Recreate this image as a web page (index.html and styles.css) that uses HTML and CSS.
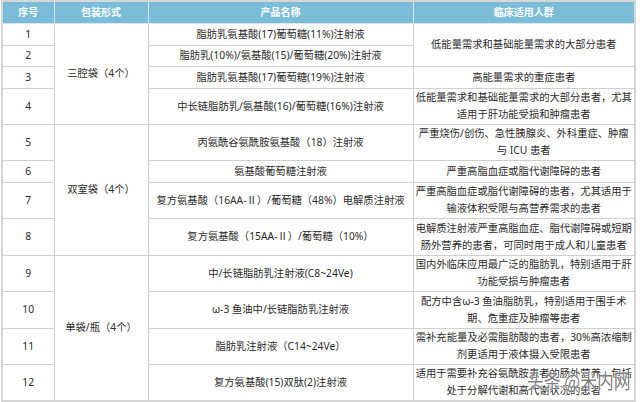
FILE: index.html
```html
<!DOCTYPE html>
<html lang="zh">
<head>
<meta charset="utf-8">
<link rel="stylesheet" href="styles.css">
</head>
<body>
<div class="wrap">
<table class="grid">
  <colgroup>
    <col class="c-no"><col class="c-pack"><col class="c-name"><col class="c-use">
  </colgroup>
  <thead>
    <tr class="h22"><th>序号</th><th>包装形式</th><th>产品名称</th><th>临床适用人群</th></tr>
  </thead>
  <tbody>
    <tr class="h22"><td>1</td><td rowspan="4">三腔袋（4个）</td><td>脂肪乳氨基酸(17)葡萄糖(11%)注射液</td><td rowspan="2">低能量需求和基础能量需求的大部分患者</td></tr>
    <tr class="h21"><td>2</td><td>脂肪乳(10%)/氨基酸(15)/葡萄糖(20%)注射液</td></tr>
    <tr class="h22"><td>3</td><td>脂肪乳氨基酸(17)葡萄糖(19%)注射液</td><td>高能量需求的重症患者</td></tr>
    <tr class="h36"><td>4</td><td>中长链脂肪乳/氨基酸(16)/葡萄糖(16%)注射液</td><td>低能量需求和基础能量需求的大部分患者，尤其<br>适用于肝功能受损和肿瘤患者</td></tr>
    <tr class="h36"><td>5</td><td rowspan="4">双室袋（4个）</td><td>丙氨酰谷氨酰胺氨基酸（18）注射液</td><td>严重烧伤/创伤、急性胰腺炎、外科重症、肿瘤<br>与 ICU 患者</td></tr>
    <tr class="h22"><td>6</td><td>氨基酸葡萄糖注射液</td><td>严重高脂血症或脂代谢障碍的患者</td></tr>
    <tr class="h36"><td>7</td><td>复方氨基酸（16AA-Ⅱ）/葡萄糖（48%）电解质注射液</td><td>严重高脂血症或脂代谢障碍的患者，尤其适用于<br>输液体积受限与高营养需求的患者</td></tr>
    <tr class="h37"><td>8</td><td>复方氨基酸（15AA-Ⅱ）/葡萄糖（10%）</td><td>电解质注射液严重高脂血症、脂代谢障碍或短期<br>肠外营养的患者，可同时用于成人和儿童患者</td></tr>
    <tr class="h36"><td>9</td><td rowspan="4">单袋/瓶（4个）</td><td>中/长链脂肪乳注射液(C8~24Ve)</td><td>国内外临床应用最广泛的脂肪乳，特别适用于肝<br>功能受损与肿瘤患者</td></tr>
    <tr class="h37"><td>10</td><td>ω-3 鱼油中/长链脂肪乳注射液</td><td>配方中含ω-3 鱼油脂肪乳，特别适用于围手术<br>期、危重症及肿瘤等患者</td></tr>
    <tr class="h36"><td>11</td><td>脂肪乳注射液（C14~24Ve）</td><td>需补充能量及必需脂肪酸的患者，30%高浓缩制<br>剂更适用于液体摄入受限患者</td></tr>
    <tr class="h37"><td>12</td><td>复方氨基酸(15)双肽(2)注射液</td><td>适用于需要补充谷氨酰胺患者的肠外营养，包括<br>处于分解代谢和高代谢状况的患者</td></tr>
  </tbody>
</table>
<div class="watermark">头条 @米内网</div>
</div>
</body>
</html>
```

FILE: styles.css
```css
html, body {
  margin: 0;
  padding: 0;
  background: #ffffff;
}
.wrap {
  position: relative;
  width: 640px;
  height: 402px;
  padding-left: 1px;
  box-sizing: border-box;
}
.grid {
  border-collapse: collapse;
  table-layout: fixed;
  width: 633px;
  border: 2px solid #d6d6d6;
  font-family: "Noto Sans", "Noto Sans CJK SC", sans-serif;
  font-size: 10.3px;
  color: #2a2a2a;
}
.c-no { width: 52px; }
.c-pack { width: 94px; }
.c-name { width: 265px; }
.c-use { width: 222px; }
.grid th {
  background: #7bbdd9;
  color: #ffffff;
  font-weight: bold;
  font-size: 10px;
  border: 1px solid #d6e8f0;
  padding: 0;
  line-height: 17px;
}
.grid td {
  border: 1px solid #cfcfcf;
  padding: 0;
  text-align: center;
  vertical-align: middle;
  line-height: 17px;
  white-space: nowrap;
  overflow: visible;
}
.h22 { height: 22px; }
.h21 { height: 21px; }
.h36 { height: 36px; }
.h37 { height: 37px; }
.watermark {
  position: absolute;
  left: 527px;
  top: 368px;
  font-family: "Noto Sans CJK SC", sans-serif;
  font-size: 20px;
  line-height: 26px;
  color: rgba(70, 70, 70, 0.7);
  text-shadow: 0 0 2px #ffffff, 0 0 1px #ffffff;
  white-space: nowrap;
  transform: scaleX(0.84);
  transform-origin: left center;
}
```
